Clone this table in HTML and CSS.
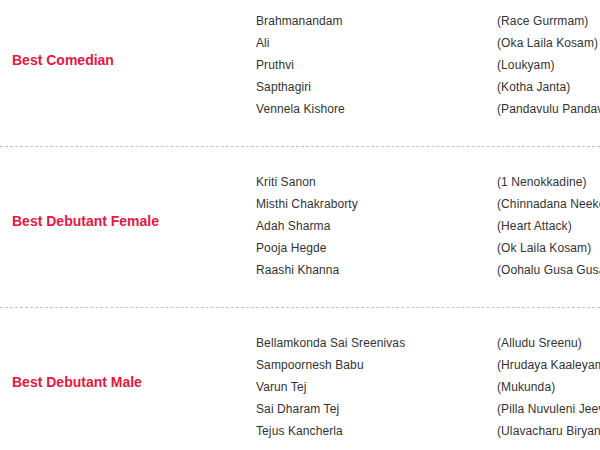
FILE: index.html
```html
<!DOCTYPE html>
<html>
<head>
<meta charset="utf-8">
<link rel="stylesheet" href="styles.css">
</head>
<body>
<div class="page">
  <section class="award award-first">
    <div class="label">Best Comedian</div>
    <div class="names">
      <div>Brahmanandam</div>
      <div>Ali</div>
      <div>Pruthvi</div>
      <div>Sapthagiri</div>
      <div>Vennela Kishore</div>
    </div>
    <div class="films">
      <div>(Race Gurrmam)</div>
      <div>(Oka Laila Kosam)</div>
      <div>(Loukyam)</div>
      <div>(Kotha Janta)</div>
      <div>(Pandavulu Pandavulu Tummeda)</div>
    </div>
  </section>
  <section class="award">
    <div class="label">Best Debutant Female</div>
    <div class="names">
      <div>Kriti Sanon</div>
      <div>Misthi Chakraborty</div>
      <div>Adah Sharma</div>
      <div>Pooja Hegde</div>
      <div>Raashi Khanna</div>
    </div>
    <div class="films">
      <div>(1 Nenokkadine)</div>
      <div>(Chinnadana Neekosam)</div>
      <div>(Heart Attack)</div>
      <div>(Ok Laila Kosam)</div>
      <div>(Oohalu Gusa Gusalade)</div>
    </div>
  </section>
  <section class="award">
    <div class="label">Best Debutant Male</div>
    <div class="names">
      <div>Bellamkonda Sai Sreenivas</div>
      <div>Sampoornesh Babu</div>
      <div>Varun Tej</div>
      <div>Sai Dharam Tej</div>
      <div>Tejus Kancherla</div>
    </div>
    <div class="films">
      <div>(Alludu Sreenu)</div>
      <div>(Hrudaya Kaaleyam)</div>
      <div>(Mukunda)</div>
      <div>(Pilla Nuvuleni Jeevitham)</div>
      <div>(Ulavacharu Biryani)</div>
    </div>
  </section>
</div>
</body>
</html>
```
FILE: styles.css
```css
html, body {
  margin: 0;
  padding: 0;
  background: #fff;
  overflow: hidden;
}
.page {
  width: 600px;
  margin-top: -15px;
  font-family: "Liberation Sans", Arial, sans-serif;
  font-size: 12px;
  letter-spacing: 0.1px;
  color: #333;
}
.award {
  display: grid;
  grid-template-columns: 256px 241px 1fr;
  align-items: center;
  padding: 24px 0 26px;
  border-bottom: 1px dashed #c8c3b6;
  white-space: nowrap;
  overflow: hidden;
}
.award-first {
  border-top: 1px dashed #c8c3b6;
}
.label {
  padding-left: 12px;
  padding-bottom: 10px;
  font-size: 14px;
  letter-spacing: 0;
  font-weight: bold;
  color: #e6173f;
}
.names div,
.films div {
  height: 22px;
  line-height: 22px;
}
```
